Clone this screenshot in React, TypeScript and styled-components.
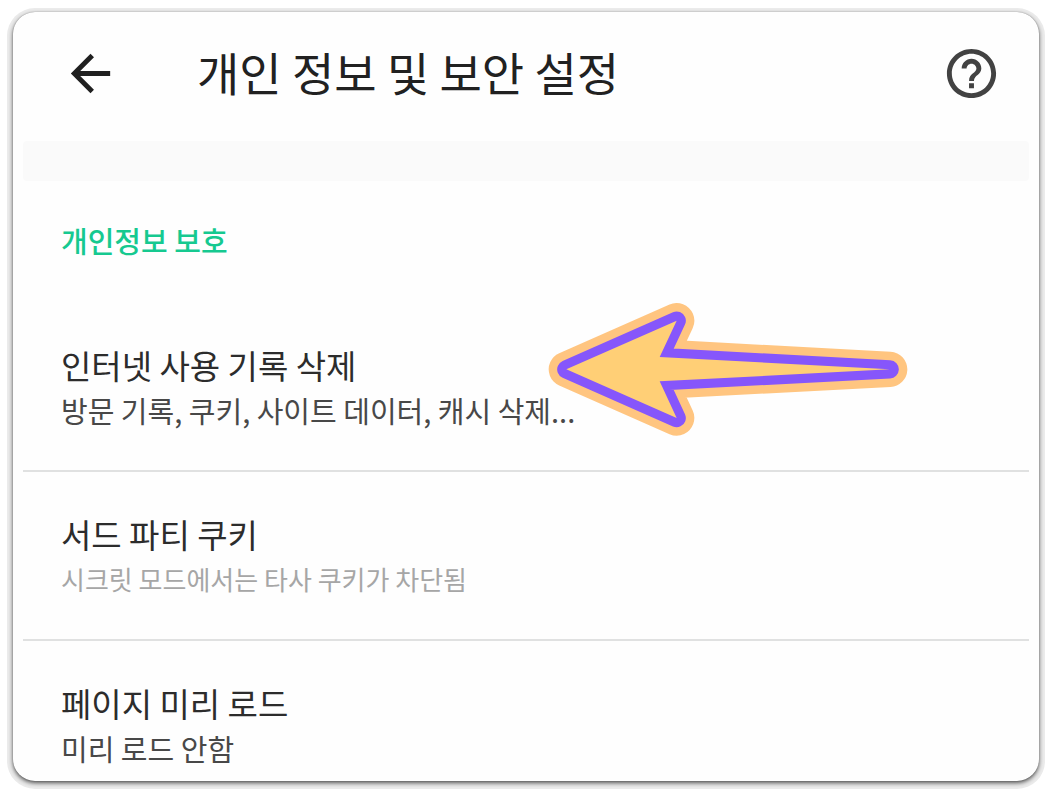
import React from "react";
import styled, { createGlobalStyle } from "styled-components";
import { MdArrowBack, MdHelpOutline } from "react-icons/md";

const GlobalStyle = createGlobalStyle`
  * { box-sizing: border-box; }
  body {
    margin: 0;
    background: #ffffff;
    font-family: "Noto Sans CJK KR", "Noto Sans", sans-serif;
  }
`;

const Page = styled.div`
  padding: 12px 13px 14px 13px;
`;

const Card = styled.main`
  display: flow-root;
  padding: 0 10px;
  border-radius: 22px;
  background: #fefefe;
  box-shadow:
    0 0 1px 0 rgba(0, 0, 0, 0.4),
    0 2px 4px 0 rgba(0, 0, 0, 0.65),
    0 2px 0 6px #ebebeb;
`;

const Header = styled.header`
  display: flex;
  align-items: center;
  height: 122px;
  margin-bottom: 7px;
  padding: 0 28px 0 38px;
`;

const IconButton = styled.button<{ $color: string }>`
  display: flex;
  padding: 0;
  border: 0;
  background: none;
  color: ${(p) => p.$color};
  font-size: 59px;
  cursor: pointer;
`;

const Title = styled.h1`
  flex: 1;
  margin: 0 0 0 77px;
  padding-bottom: 4px;
  color: #212121;
  font-size: 46px;
  font-weight: 400;
  line-height: 64px;
`;

const Band = styled.div`
  height: 40px;
  border-radius: 4px;
  background: #fafafa;
`;

const SectionLabel = styled.h2`
  margin: 0;
  padding: 39px 38px 0;
  color: #16c990;
  font-size: 29px;
  font-weight: 500;
  line-height: 40px;
`;

const List = styled.ul`
  margin: 0;
  padding: 43px 0 0;
  list-style: none;
`;

const Item = styled.li`
  position: relative;
  & + & {
    border-top: 2px solid #e0e1e1;
  }
`;

const ItemLink = styled.a<{ $last?: boolean }>`
  display: block;
  padding: 38px 38px ${(p) => (p.$last ? 12 : 39)}px;
  color: inherit;
  text-decoration: none;
`;

const ItemTitle = styled.span`
  display: block;
  color: #2c2c2c;
  font-size: 33px;
  line-height: 48px;
`;

const ItemText = styled.span<{ $muted?: boolean }>`
  display: block;
  color: ${(p) => (p.$muted ? "#a6a6a6" : "#484848")};
  font-size: ${(p) => (p.$muted ? 26 : 29)}px;
  line-height: 42px;
`;

const Pointer = styled.svg`
  position: absolute;
  top: -3px;
  left: 524px;
  width: 362px;
  height: 138px;
  pointer-events: none;
`;

const arrowShape = "M108 238L439 92L388 201L1078 238L388 274L439 384Z";

const items = [
  { title: "인터넷 사용 기록 삭제", text: "방문 기록, 쿠키, 사이트 데이터, 캐시 삭제...", pointed: true },
  { title: "서드 파티 쿠키", text: "시크릿 모드에서는 타사 쿠키가 차단됨", muted: true },
  { title: "페이지 미리 로드", text: "미리 로드 안함" },
];

export default function App() {
  return (
    <Page>
      <GlobalStyle />
      <Card>
        <Header>
          <IconButton type="button" aria-label="뒤로" $color="#202020">
            <MdArrowBack />
          </IconButton>
          <Title>개인 정보 및 보안 설정</Title>
          <IconButton type="button" aria-label="도움말" $color="#424242">
            <MdHelpOutline />
          </IconButton>
        </Header>
        <Band />
        <SectionLabel>개인정보 보호</SectionLabel>
        <List>
          {items.map((item, i) => (
            <Item key={item.title}>
              <ItemLink href="#" $last={i === items.length - 1}>
                <ItemTitle>{item.title}</ItemTitle>
                <ItemText $muted={item.muted}>{item.text}</ItemText>
              </ItemLink>
              {item.pointed && (
                <Pointer viewBox="50 30 1086 414" aria-hidden="true">
                  <path d={arrowShape} fill="none" stroke="#ffc580" strokeWidth="106" strokeLinejoin="round" />
                  <path d={arrowShape} fill="none" stroke="#8656fb" strokeWidth="55" strokeLinejoin="round" />
                  <path d={arrowShape} fill="#ffcf76" />
                </Pointer>
              )}
            </Item>
          ))}
        </List>
      </Card>
    </Page>
  );
}
